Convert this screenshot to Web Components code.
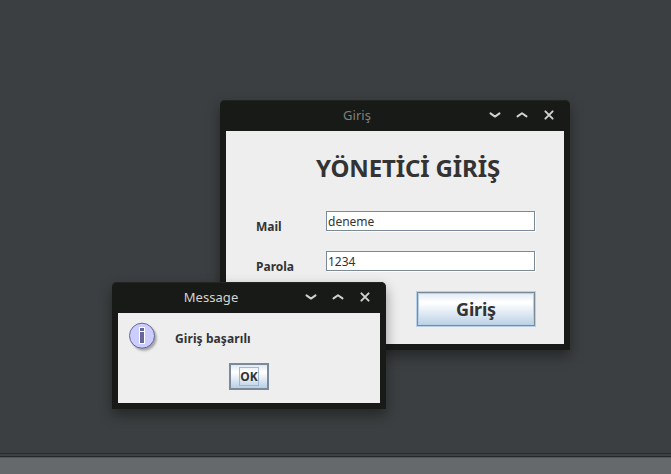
<!DOCTYPE html>
<html lang="tr">
<head>
<meta charset="utf-8">
<title>Giriş</title>
<style>
html,body{margin:0;height:100%}
body{font-family:"Noto Sans",sans-serif;overflow:hidden}
</style>
</head>
<body>
<desk-top>
  <app-window class="login" label="Giriş" style="--title:#7e807f"><login-form></login-form></app-window>
  <app-window class="message" label="Message" style="--title:#d3d5d4"><message-box>Giriş başarılı</message-box></app-window>
</desk-top>
<script>
const define = (name, html, init) => customElements.define(name, class extends HTMLElement {
  constructor() {
    super();
    this.attachShadow({mode: 'open'}).innerHTML = html;
  }
  connectedCallback() { if (init) init(this, this.shadowRoot); }
});

define('desk-top', `<style>
:host{display:flex;flex-direction:column;position:relative;width:671px;height:474px;background:#3c3f41;overflow:hidden}
.space{flex:1}
.bar{height:17px;background:#65696b;border-top:1px solid #515557;box-sizing:border-box}
.rule{height:4px;background:linear-gradient(#292c2e 0 1px,#3d4143 1px 3px,#25282a 3px)}
::slotted(app-window){position:absolute}
::slotted(.login){left:220px;top:100px;width:350px;height:250px}
::slotted(.message){left:112px;top:282px;width:274px;height:127px}
</style><div class="space"></div><div class="rule"></div><div class="bar"></div><slot></slot>`);

define('app-window', `<style>
:host{display:flex;flex-direction:column;box-sizing:border-box;background:#181a17;border-radius:5px 5px 0 0;padding:0 6px 6px;box-shadow:inset 0 1px #222522,0 6px 13px rgba(0,0,0,.4)}
header{height:31px;box-sizing:border-box;display:flex;align-items:center;padding:0 2px 2px 7px;flex:none}
.t{flex:1;text-align:center;font-size:13px;line-height:18px;color:var(--title);letter-spacing:.05px}
svg{width:27px;height:17px;flex:none;fill:none;stroke:#d0d1d0;stroke-width:2;stroke-linecap:round;stroke-linejoin:round}
main{flex:1;background:#eee;display:flex}
</style><header><span class="t"></span>
<svg viewBox="0 0 27 17"><path d="M9.5 7.4l4.5 3.2L18.5 7.4"/></svg>
<svg viewBox="0 0 27 17"><path d="M9.5 10.4l4.5-3.2L18.5 10.4"/></svg>
<svg viewBox="0 0 27 17"><path d="M10.4 5.4l7.2 7.2M17.6 5.4l-7.2 7.2"/></svg>
</header><main><slot></slot></main>`, (el, r) => { r.querySelector('.t').textContent = el.getAttribute('label'); });

define('text-field', `<style>
:host{display:block;box-sizing:border-box;width:209px;height:20px;border:1px solid #7a8a99;background:#fff;box-shadow:1px 1px #fff;padding-left:1px;font-size:12px;line-height:19px;color:#333}
</style><slot></slot>`);

define('metal-button', `<style>
:host{display:flex;align-items:center;justify-content:center;box-sizing:border-box;color:#333;font-weight:bold;background:linear-gradient(#dde8f3,#fff 30%,#fff 32%,#b8cfe5)}
:host([large]){width:120px;height:36px;font-size:18px;letter-spacing:-.2px;border:1px solid #b8cfe5;box-shadow:inset 0 0 0 1px #7a8a99,inset 0 0 0 2px #b8cfe5}
:host([focused]){width:40px;height:27px;font-size:12px;border:2px solid #7a8a99}
:host([focused]) span{box-sizing:border-box;width:20px;height:19px;border:1px solid #a3b8cc;line-height:18px;display:flex;justify-content:center}
</style><span><slot></slot></span>`);

define('login-form', `<style>
:host{flex:1;display:grid;grid-template-columns:70px 209px;grid-template-rows:80px 40px 40px 36px;padding-left:30px;color:#333}
h1{grid-column:1/3;margin:0;padding:20px 0 0 60px;font-size:24px;line-height:34px;letter-spacing:-.12px}
label{font-size:12px;font-weight:bold;line-height:16px;padding-top:8px}
metal-button{grid-column:2;margin-left:90px}
</style><h1>YÖNETİCİ GİRİŞ</h1>
<label>Mail</label><text-field>deneme</text-field>
<label>Parola</label><text-field>1234</text-field>
<metal-button large>Giriş</metal-button>`);

define('message-box', `<style>
:host{flex:1;display:grid;grid-template-columns:57px 1fr;grid-template-rows:50px 27px;color:#333}
svg{width:36px;height:36px;margin:6px 0 0 8px}
p{margin:0;padding-top:17px;font-size:12px;font-weight:bold;line-height:17px;letter-spacing:.09px}
metal-button{grid-column:1/3;justify-self:center}
</style>
<svg viewBox="0 0 36 36"><defs><filter id="b" x="-30%" y="-30%" width="160%" height="160%"><feGaussianBlur stdDeviation="1.3"/></filter></defs>
<circle cx="18" cy="19" r="12.6" fill="#888" opacity=".75" filter="url(#b)"/>
<circle cx="16" cy="16.7" r="12.5" fill="#ccf" stroke="#669"/>
<path d="M13 8h6v17h-6z" fill="#fff"/><path d="M14 9h4v3h-4zM14 13h4v11h-4z" fill="#669"/></svg>
<p><slot></slot></p><metal-button focused>OK</metal-button>`);
</script>
</body>
</html>
